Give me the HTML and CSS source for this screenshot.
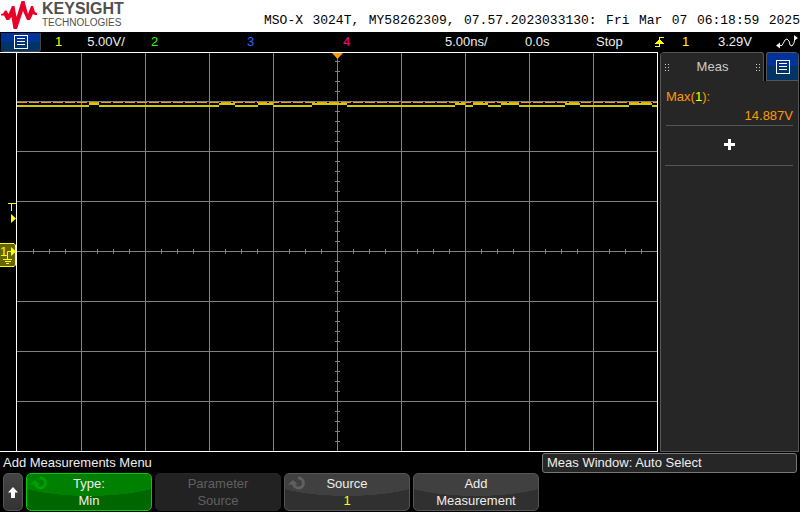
FILE: index.html
```html
<!DOCTYPE html>
<html lang="en">
<head>
<meta charset="utf-8">
<title>MSO-X 3024T</title>
<link rel="stylesheet" href="styles.css">
</head>
<body>
<svg class="defs" aria-hidden="true">
  <symbol id="list" viewBox="0 0 14 14">
    <path d="M.5 .5h13v13H.5zM3 3.5h8M3 6.5h8M3 9.5h8" fill="none" stroke="#fff" shape-rendering="crispEdges"/>
  </symbol>
  <symbol id="turn" viewBox="0 0 18 16">
    <path d="M10 3A5 5 0 1 1 5.500 9" fill="none" stroke="currentColor" stroke-width="3"/>
    <path d="M0 9.500L5 5L10 9.500z" fill="currentColor"/>
  </symbol>
</svg>

<header class="brand">
  <svg class="logo" viewBox="0 0 38 30" aria-hidden="true">
    <path d="M1 14L3 13.500L5 10.500H6.500L8.500 14L12 6H14.500L16.500 17L21.500 1H24.500L28 14L31 6H33L35 12L37 13V15H35L33 14L30 20H27L23 11L17 29H13.500L11.500 17L9 20H6.500L4 15.500H1z" fill="#e90029"/>
  </svg>
  <div class="brand-name">
    <strong>KEYSIGHT</strong>
    <span>TECHNOLOGIES</span>
  </div>
  <p class="ident">
    <span>MSO-X</span> <span>3024T,</span> <span>MY58262309,</span> <span>07.57.2023033130:</span>
    <span>Fri</span> <span>Mar</span> <span>07</span> <span>06:18:59</span> <span>2025</span>
  </p>
</header>

<section class="status" aria-label="Acquisition status">
  <button class="menu-btn" type="button" aria-label="Main menu"><svg class="list-icon"><use href="#list"/></svg></button>
  <div class="channel"><span class="yellow">1</span><span>5.00V/</span></div>
  <div class="green">2</div>
  <div class="blue">3</div>
  <div class="pink">4</div>
  <div>5.00ns/</div>
  <div>0.0s</div>
  <div>Stop</div>
  <svg class="edge" viewBox="0 0 10 12" shape-rendering="crispEdges" aria-hidden="true">
    <path d="M0 10.500h5M4.500 11V1M4 1.500h5" fill="none" stroke="#ff0"/>
    <path d="M0 8L4.500 3L9 8z" fill="#ff0"/>
  </svg>
  <div class="yellow">1</div>
  <div>3.29V</div>
  <svg class="wave" viewBox="0 0 22 14" aria-hidden="true">
    <path d="M3 10.500h3L9 5l2-1 2 2 1 4 2 1 2-3 1-5h1" fill="none" stroke="#eee"/>
    <path d="M0 10.500l4-3v6zM22 3l-4-3v6z" fill="#eee"/>
  </svg>
</section>

<main class="scope">
  <svg class="graph" viewBox="0 0 658 400" role="img" aria-label="Channel 1 waveform">
    <g shape-rendering="crispEdges" fill="none">
      <path stroke="#808080" d="M81.500 0v400M145.500 0v400M209.500 0v400M273.500 0v400M337.500 0v400M401.500 0v400M465.500 0v400M529.500 0v400M593.500 0v400M17 49.500h640M17 99.500h640M17 149.500h640M17 199.500h640M17 249.500h640M17 299.500h640M17 349.500h640"/>
      <path stroke="#808080" stroke-width="5" stroke-dasharray="1 15" d="M33 199.500h624"/>
      <path stroke="#808080" stroke-width="5" stroke-dasharray="1 9" d="M337.500 9v390"/>
      <path stroke="#cc0" stroke-width="2" d="M17 54h72M99 54h120M235 54h23M273 54h39M347 54h108M465 54h8M488 54h13M519 54h46M580 54h49M652 54h5M89 52h10M219 52h16M258 52h15M312 52h35M455 52h10M473 52h15M501 52h18M565 52h15M629 52h23"/>
      <path stroke="#f90" stroke-dasharray="10 2" d="M17 50.500h640"/>
      <path stroke="#fff" d="M0 .500h657.500V399.500H0M16.500 0v399"/>
    </g>
    <path d="M332 1h11l-5.500 6z" fill="#f90"/>
    <path d="M8 151.500h8M11.500 152v7" stroke="#ff0"/>
    <path d="M11 162v9l5-4.500z" fill="#ff0"/>
    <path d="M-1 191.500h15l1.500 1.500v20l-1.500 1.500H-1z" fill="#660" stroke="#ff0"/>
    <text class="mark" x="0" y="204">1</text>
    <path d="M11 195v9l5-4.500z" fill="#ff0"/>
    <path d="M11 199.500H7.500v8M3 207.500h9M5 209.500h6M6 211.500h3" fill="none" stroke="#ff0"/>
  </svg>

  <aside class="side" aria-label="Measurements">
    <div class="tabs">
      <button class="tab" type="button">
        <span class="grip"></span>Meas<span class="grip"></span>
      </button>
      <button class="tab-menu" type="button" aria-label="Panel menu"><svg class="list-icon"><use href="#list"/></svg></button>
    </div>
    <dl class="measure">
      <dt>Max(<span class="yellow">1</span>):</dt>
      <dd>14.887V</dd>
    </dl>
    <button class="add" type="button" aria-label="Add">
      <svg viewBox="0 0 11 11"><path d="M4 0h3v4h4v3H7v4H4V7H0V4h4z" fill="#fff"/></svg>
    </button>
  </aside>
</main>

<footer>
  <div class="messages">
    <h1>Add Measurements Menu</h1>
    <p>Meas Window: Auto Select</p>
  </div>
  <nav class="softkeys" aria-label="Softkeys">
    <button class="key up" type="button" aria-label="Back"><svg viewBox="0 0 10 11"><path d="M5 0l5 5.500H7V11H3V5.500H0z" fill="#fff"/></svg></button>
    <button class="key active" type="button"><svg class="turn"><use href="#turn"/></svg><span>Type:</span><span>Min</span></button>
    <button class="key" type="button" disabled><span>Parameter</span><span>Source</span></button>
    <button class="key" type="button"><svg class="turn"><use href="#turn"/></svg><span>Source</span><span class="yellow">1</span></button>
    <button class="key" type="button"><span>Add</span><span>Measurement</span></button>
  </nav>
</footer>
</body>
</html>
```
FILE: styles.css
```css
* { box-sizing: border-box; margin: 0; padding: 0; }

body {
  background: #000;
  color: #eee;
  font: 13px/18px "Liberation Sans", Arial, sans-serif;
}

button {
  border: 0;
  background: none;
  color: inherit;
  font: inherit;
}

svg { display: block; }
.defs { display: none; }

.yellow { color: #ff0; }
.green { color: #3f0; }
.blue { color: #36f; }
.pink { color: #f09; }

/* Brand strip */
.brand {
  display: flex;
  min-height: 32px;
  background: #fff;
  color: #505050;
}
.logo { width: 38px; height: 30px; }
.brand-name {
  display: flex;
  flex-direction: column;
  padding: 1px 0 0 4px;
}
.brand-name strong { font-size: 16px; line-height: 16px; }
.brand-name span { font-size: 10px; line-height: 12px; }
.ident {
  display: flex;
  justify-content: space-between;
  width: 67%;
  margin-left: auto;
  padding-top: 12px;
  color: #000;
  font: 13px/18px "Liberation Mono", monospace;
}

/* Status bar */
.status {
  display: grid;
  grid-template-columns: 55fr 96fr 96fr 96fr 102fr 80fr 71fr 59fr 27fr 36fr 58fr 24fr;
  align-items: center;
  height: 20px;
}
.channel { display: flex; gap: 25px; }
.menu-btn {
  display: grid;
  place-items: center;
  justify-self: start;
  width: 40px;
  height: 19px;
  margin-left: 1px;
  border: solid #444;
  border-width: 0 1px 1px 0;
  border-radius: 0 0 3px 3px;
  background: linear-gradient(#039 50%, #036 50%);
}
.list-icon { width: 14px; height: 14px; }
.edge { width: 10px; height: 12px; }
.wave { width: 22px; height: 14px; }

/* Waveform and side panel */
.scope {
  display: grid;
  grid-template-columns: minmax(0, 1fr) 142px;
}
.graph { width: 100%; height: auto; }
.mark { fill: #ff0; font-size: 13px; }

.side {
  margin: 0 1px 0 2px;
  border: solid #555;
  border-width: 0 1px 1px;
  border-radius: 4px 4px 0 0;
  background: #262626;
}
.tabs { display: flex; height: 29px; background: #000; }
.tab {
  display: flex;
  flex: 1;
  align-items: center;
  justify-content: space-between;
  padding: 0 3px 0 4px;
  border: solid #555;
  border-width: 1px 1px 0 0;
  border-radius: 3px 3px 0 0;
  background: #262626;
  color: #ccc;
}
.grip {
  width: 4px;
  height: 7px;
  background: conic-gradient(from 270deg at 1px 1px, #ccc 90deg, transparent 0) 0 0 / 3px 3px;
}
.tab-menu {
  display: grid;
  place-items: center;
  width: 32px;
  margin-left: 2px;
  border: 1px solid #555;
  border-width: 1px 0 1px 1px;
  border-radius: 3px 3px 0 0;
  background: linear-gradient(#039 50%, #036 50%);
}
.measure {
  margin: 0 5px;
  padding-top: 6px;
  border-bottom: 1px solid #555;
  color: #f90;
  line-height: 19px;
}
.measure dd { text-align: right; }
.add {
  display: grid;
  place-items: center;
  width: calc(100% - 9px);
  height: 40px;
  margin: 0 4px;
  padding-bottom: 2px;
  border-bottom: 1px solid #555;
}
.add svg { width: 11px; height: 11px; }

/* Messages and softkeys */
.messages {
  display: flex;
  justify-content: space-between;
  padding: 1px 3px 0;
}
.messages h1 { font-size: 13px; font-weight: 400; line-height: 20px; }
.messages p {
  width: 255px;
  padding-left: 4px;
  border: 1px solid #777;
  border-radius: 3px;
  background: #262626;
}
.softkeys {
  display: grid;
  grid-template-columns: 20px repeat(4, 126px);
  gap: 3px;
  padding: 0 3px 1px;
}
.key {
  position: relative;
  display: flex;
  flex-direction: column;
  align-items: center;
  justify-content: flex-end;
  height: 38px;
  border: 1px solid #555;
  border-radius: 5px;
  background: radial-gradient(86px 22px at 50% 0, #404040 99%, #303030 100%);
}
.key span { line-height: 17px; }
.key span + span { line-height: 18px; }
.key.up { justify-content: center; background: linear-gradient(#444, #333); }
.key.up svg { width: 10px; height: 11px; }
.key.active {
  border-color: #0c0;
  background: radial-gradient(86px 22px at 50% 0, #008000 99%, #060 100%);
}
.key:disabled { border-color: #262626; background: #222; color: #606060; }
.turn {
  position: absolute;
  top: 1px;
  left: 3px;
  width: 18px;
  height: 16px;
  color: #606060;
}
.active .turn { color: #00a000; }
```
